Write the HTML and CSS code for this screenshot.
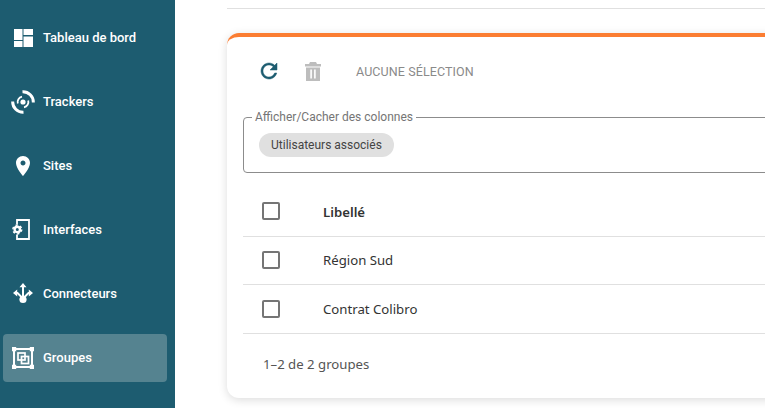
FILE: index.html
```html
<!DOCTYPE html>
<html lang="fr">
<head>
    <meta charset="UTF-8">
    <title>Groupes</title>
    <link rel="stylesheet" href="styles.css">
</head>
<body>
<nav class="sidebar">
    <a class="nav-item">
        <svg class="nav-icon" viewBox="0 0 24 24"><path fill="#fff" d="M3 3h8.500v11H3zM3 15h8.500v6H3zM12.500 3H22v6h-9.500zM12.500 10.500H22V21h-9.500z"/></svg>
        <span>Tableau de bord</span>
    </a>
    <a class="nav-item">
        <svg class="nav-icon" viewBox="0 0 24 24" fill="none" stroke="#fff">
            <circle cx="12" cy="12" r="2.600" fill="#fff" stroke="none"/>
            <path stroke-width="1.800" d="M6.800 13.500a5.400 5.400 0 0 1 4.200-6.800M17.200 10.500a5.400 5.400 0 0 1-4.200 6.800"/>
            <path stroke-width="3" d="M11.500 1.700a10.400 10.400 0 0 1 10.800 10.800M12.500 22.300a10.400 10.400 0 0 1-10.800-10.800"/>
        </svg>
        <span>Trackers</span>
    </a>
    <a class="nav-item">
        <svg class="nav-icon" viewBox="0 0 24 24"><path fill="#fff" d="M12 2C8.130 2 5 5.130 5 9c0 5.250 7 13 7 13s7-7.750 7-13c0-3.870-3.130-7-7-7zm0 9.500c-1.380 0-2.500-1.120-2.500-2.500s1.120-2.500 2.500-2.500 2.500 1.120 2.500 2.500-1.120 2.500-2.500 2.500z"/></svg>
        <span>Sites</span>
    </a>
    <a class="nav-item">
        <svg class="nav-icon" viewBox="0 0 24 24">
            <path fill="none" stroke="#fff" stroke-width="1.800" d="M6 6.500V2h12v19H6v-4.500"/>
            <circle cx="6.300" cy="11.500" r="2.700" fill="none" stroke="#fff" stroke-width="2.400"/>
            <circle cx="6.300" cy="11.500" r="4.400" fill="none" stroke="#fff" stroke-width="1.500" stroke-dasharray="2.300 2.300"/>
        </svg>
        <span>Interfaces</span>
    </a>
    <a class="nav-item">
        <svg class="nav-icon" viewBox="0 0 24 24">
            <path fill="none" stroke="#fff" stroke-width="2" d="M12 3v13M4 11h2.500l5.500 5.500M20 11h-2.500L12 16.500"/>
            <path fill="#fff" d="M12 1l3.500 4.200h-7zM2 11l4.200-3.500v7zM22 11l-4.200-3.500v7z"/>
            <circle cx="12" cy="17.500" r="3.600" fill="#fff"/>
        </svg>
        <span>Connecteurs</span>
    </a>
    <a class="nav-item active">
        <svg class="nav-icon" viewBox="0 0 24 24" fill="none" stroke="#fff" stroke-width="2">
            <rect x="3" y="3" width="18" height="18"/>
            <rect x="7" y="7" width="7" height="7" stroke-width="1.700"/>
            <rect x="10.500" y="10.500" width="7" height="7" stroke-width="1.700"/>
            <path fill="#fff" stroke="none" d="M1 1h4.200v4.200H1zM18.800 1H23v4.200h-4.200zM1 18.800h4.200V23H1zM18.800 18.800H23V23h-4.200z"/>
        </svg>
        <span>Groupes</span>
    </a>
</nav>
<main class="content">
    <div class="top-line"></div>
    <section class="card">
        <div class="toolbar">
            <svg class="tool-icon" viewBox="0 0 24 24"><path fill="#1d5c70" stroke="#1d5c70" stroke-width=".5" d="M17.650 6.350C16.200 4.900 14.210 4 12 4c-4.420 0-7.990 3.580-7.990 8s3.570 8 7.990 8c3.730 0 6.840-2.550 7.730-6h-2.080c-.82 2.330-3.040 4-5.650 4-3.310 0-6-2.690-6-6s2.690-6 6-6c1.660 0 3.140.69 4.220 1.780L13 11h7V4l-2.350 2.350z"/></svg>
            <svg class="tool-icon" viewBox="0 0 24 24"><path fill="#bdbdbd" fill-rule="evenodd" d="M9 3h6l1 2h4v2.500H4V5h4zM5 8.500h14V22H5zM9.300 10.500v9h1.600v-9zM13.100 10.500v9h1.600v-9z"/></svg>
            <span class="selection">AUCUNE SÉLECTION</span>
        </div>
        <fieldset class="columns">
            <legend>Afficher/Cacher des colonnes</legend>
            <span class="chip">Utilisateurs associés</span>
        </fieldset>
        <table class="list">
            <tr class="head">
                <td class="cell-check"><input class="check" type="checkbox"></td>
                <td class="cell-text">Libellé</td>
            </tr>
            <tr class="short">
                <td class="cell-check"><input class="check" type="checkbox"></td>
                <td class="cell-text">Région Sud</td>
            </tr>
            <tr>
                <td class="cell-check"><input class="check" type="checkbox"></td>
                <td class="cell-text">Contrat Colibro</td>
            </tr>
        </table>
        <div class="count">1–2 de 2 groupes</div>
    </section>
</main>
</body>
</html>
```
FILE: styles.css
```css
html, body {
    height: 100%;
}

body {
    margin: 0;
    display: flex;
    overflow: hidden;
    background-color: #fff;
    font-family: "Noto Sans", sans-serif;
}

.sidebar {
    width: 175px;
    flex-shrink: 0;
    box-sizing: border-box;
    padding: 14px 8px 0 3px;
    background-color: #1d5c70;
}

.nav-item {
    display: flex;
    align-items: center;
    gap: 8px;
    height: 48px;
    margin-bottom: 16px;
    padding-left: 8px;
    border-radius: 4px;
    color: #fff;
    font: 500 13px "Roboto", sans-serif;
}

.nav-item span {
    margin-top: -2px;
}

.nav-item.active {
    background-color: #558390;
}

.nav-icon {
    width: 24px;
    height: 24px;
    flex-shrink: 0;
}

.content {
    flex-shrink: 0;
    width: 700px;
    padding: 8px 0 0 52px;
}

.top-line {
    height: 1px;
    background-color: #e0e0e0;
}

.card {
    margin-top: 24px;
    height: 361px;
    padding: 0 16px;
    border-top: 4px solid #fb7d32;
    border-radius: 12px;
    background-color: #fff;
    box-shadow: 0 2px 10px rgba(0, 0, 0, .14);
}

.toolbar {
    display: flex;
    align-items: center;
    height: 68px;
    padding-left: 14px;
}

.tool-icon {
    width: 24px;
    height: 24px;
    margin-right: 20px;
}

.selection {
    margin-left: 11px;
    color: #8a8a8a;
    font: 400 12.5px "Roboto", sans-serif;
    letter-spacing: .1px;
}

.columns {
    height: 63px;
    box-sizing: border-box;
    margin: 5px 0 0;
    padding: 0 15px;
    border: 1px solid #8c8c8c;
    border-radius: 4px;
}

.columns legend {
    padding: 0 3px;
    margin-left: -7px;
    color: #757575;
    font: 12px "Roboto", sans-serif;
}

.chip {
    display: inline-block;
    margin-top: 9px;
    padding: 0 12px;
    border-radius: 12px;
    background-color: #e0e0e0;
    color: #444;
    font: 12px/24px "Roboto", sans-serif;
}

.list {
    width: 100%;
    margin-top: 14px;
    border-collapse: collapse;
    color: #333;
    font-size: 13.2px;
}

.list td {
    height: 49px;
    box-sizing: border-box;
    padding: 0;
    border-bottom: 1px solid #e0e0e0;
}

.list .short td {
    height: 48px;
}

.list .head {
    font-weight: 600;
}

.list .cell-check {
    width: 80px;
    padding-left: 19px;
}

.list .head .cell-text {
    padding-top: 2px;
}

.check {
    display: block;
    appearance: none;
    width: 18px;
    height: 18px;
    margin: 0;
    border: 2px solid #757575;
    border-radius: 2px;
}

.count {
    margin-top: 21px;
    margin-left: 20px;
    color: #555;
    font-size: 13.2px;
}
```
